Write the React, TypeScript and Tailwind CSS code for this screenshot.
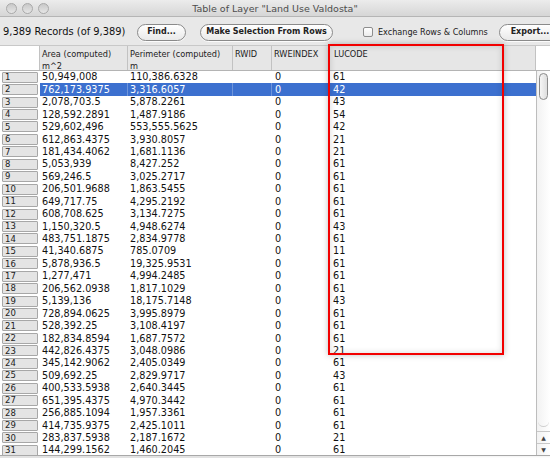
import React from 'react'

const data: Array<[string, string, string]> = [
    ['50,949,008', '110,386.6328', '61'],
    ['762,173.9375', '3,316.6057', '42'],
    ['2,078,703.5', '5,878.2261', '43'],
    ['128,592.2891', '1,487.9186', '54'],
    ['529,602,496', '553,555.5625', '42'],
    ['612,863.4375', '3,930.8057', '21'],
    ['181,434.4062', '1,681.1136', '21'],
    ['5,053,939', '8,427.252', '61'],
    ['569,246.5', '3,025.2717', '61'],
    ['206,501.9688', '1,863.5455', '61'],
    ['649,717.75', '4,295.2192', '61'],
    ['608,708.625', '3,134.7275', '61'],
    ['1,150,320.5', '4,948.6274', '43'],
    ['483,751.1875', '2,834.9778', '61'],
    ['41,340.6875', '785.0709', '11'],
    ['5,878,936.5', '19,325.9531', '61'],
    ['1,277,471', '4,994.2485', '61'],
    ['206,562.0938', '1,817.1029', '61'],
    ['5,139,136', '18,175.7148', '43'],
    ['728,894.0625', '3,995.8979', '61'],
    ['528,392.25', '3,108.4197', '61'],
    ['182,834.8594', '1,687.7572', '61'],
    ['442,826.4375', '3,048.0986', '21'],
    ['345,142.9062', '2,405.0349', '61'],
    ['509,692.25', '2,829.9717', '43'],
    ['400,533.5938', '2,640.3445', '61'],
    ['651,395.4375', '4,970.3442', '61'],
    ['256,885.1094', '1,957.3361', '61'],
    ['414,735.9375', '2,425.1011', '61'],
    ['283,837.5938', '2,187.1672', '21'],
    ['144,299.1562', '1,460.2045', '61']
]

function TrafficLight() {
    return (
        <div className="w-[11px] h-[11px] rounded-full border border-[#a9a9a9] bg-gradient-to-b from-[#c8c8c8] to-[#e6e6e6]" />
    )
}

function PillButton({ label, w }: { label: string; w: string }) {
    return (
        <div
            className={`${w} h-[17px] shrink-0 rounded-full border border-[#8a8a8a] bg-gradient-to-b from-white to-[#e9e9e9] flex items-center justify-center text-[8px] font-bold text-[#222] shadow-[0_1px_0_rgba(255,255,255,0.8)]`}
        >
            {label}
        </div>
    )
}

function HeaderCell({ w, top, bottom }: { w: string; top: string; bottom?: string }) {
    return (
        <div className={`${w} shrink-0 h-full border-r border-[#c2c2c2] pl-[2px] pt-[2px] text-[8.2px] leading-[12px] text-[#222]`}>
            <div>{top}</div>
            {bottom && <div>{bottom}</div>}
        </div>
    )
}

function Row({ idx, item }: { idx: number; item: [string, string, string] }) {
    const selected = idx == 1
    const cell = selected ? 'border-r border-[#6f95da]' : 'border-r border-white'
    return (
        <div
            className={`flex h-[12.45px] items-center text-[9.7px] leading-none ${
                selected ? 'bg-[#3c70cf] text-white' : 'bg-white text-[#111]'
            }`}
        >
            <div className="w-[40px] h-full shrink-0 bg-white flex items-center pl-[2px]">
                <div className="w-[36px] h-[11px] border border-[#a7a7a7] bg-[#e4e4e4] rounded-[1px] flex items-center pl-[2px] text-[8.5px] text-[#222]">
                    {idx + 1}
                </div>
            </div>
            <div className={`w-[88px] h-full shrink-0 flex items-center pl-[2px] ${cell}`}>{item[0]}</div>
            <div className={`w-[105px] h-full shrink-0 flex items-center pl-[2px] ${cell}`}>{item[1]}</div>
            <div className={`w-[39px] h-full shrink-0 ${cell}`}></div>
            <div className={`w-[57px] h-full shrink-0 flex items-center pl-[3px] ${cell}`}>0</div>
            <div className="w-[207px] h-full shrink-0 flex items-center pl-[4px]">{item[2]}</div>
        </div>
    )
}

export default function App() {
    return (
        <div className="relative w-[550px] h-[458px] overflow-hidden bg-[#e8e8e8] flex flex-col font-['DejaVu_Sans',sans-serif]">
            {/* title bar */}
            <div className="relative h-[17px] shrink-0 bg-gradient-to-b from-[#ececec] to-[#d6d6d6] border-b border-[#b5b5b5] flex items-center">
                <div className="flex gap-[5px] pl-[6px] pt-[1px]">
                    <TrafficLight />
                    <TrafficLight />
                    <TrafficLight />
                </div>
                <div className="absolute left-0 right-0 top-[3px] text-center text-[9.5px] leading-[12px] text-[#4d4d4d]">
                    Table of Layer "Land Use Valdosta"
                </div>
            </div>

            {/* toolbar */}
            <div className="h-[28px] shrink-0 flex items-center pl-[3px] pt-[2px] whitespace-nowrap">
                <span className="text-[9.9px] text-[#111] shrink-0 w-[134px]">9,389 Records (of 9,389)</span>
                <PillButton label="Find..." w="w-[49px]" />
                <div className="w-[14px] shrink-0" />
                <PillButton label="Make Selection From Rows" w="w-[133px]" />
                <div className="w-[30px] shrink-0" />
                <div className="w-[10px] h-[10px] shrink-0 border border-[#8d8d8d] rounded-[2px] bg-gradient-to-b from-white to-[#ececec]" />
                <span className="ml-[5px] w-[121px] shrink-0 text-[8.1px] text-[#222]">Exchange Rows &amp; Columns</span>
                <PillButton label="Export..." w="w-[62px]" />
            </div>

            {/* header */}
            <div className="h-[26px] shrink-0 flex border-t border-[#c8c8c8] border-b border-b-[#b4b4b4] bg-[#e6e6e6]">
                <div className="w-[40px] shrink-0 h-full bg-white border-r border-[#c2c2c2]" />
                <HeaderCell w="w-[88px]" top="Area (computed)" bottom="m^2" />
                <HeaderCell w="w-[105px]" top="Perimeter (computed)" bottom="m" />
                <HeaderCell w="w-[39px]" top="RWID" />
                <HeaderCell w="w-[57px]" top="RWEINDEX" />
                <div className="w-[207px] shrink-0 h-full border-r border-[#c2c2c2] pl-[5px] pt-[2px] text-[8.2px] leading-[12px] text-[#222]">
                    LUCODE
                </div>
                <div className="flex-1 h-full bg-white" />
            </div>

            {/* body */}
            <div className="flex flex-1 min-h-0">
                <div className="flex-1 overflow-hidden bg-white">
                    {data.map((item, i) => (
                        <Row key={i} idx={i} item={item} />
                    ))}
                </div>
                <div className="w-[14px] shrink-0 border-l border-[#bdbdbd] bg-gradient-to-r from-[#f2f2f2] to-white flex flex-col">
                    <div className="mx-[2px] mt-[2px] h-[27px] rounded-full border border-[#8a8a8a] bg-gradient-to-r from-[#f6f6f6] to-[#dedede]" />
                    <div className="flex-1 mx-[1px] rounded-b-full border-b border-[#d0d0d0]" />
                    <div className="h-[12px] mt-[4px] flex items-center justify-center text-[6px] text-[#444] border-t border-[#c8c8c8]">▲</div>
                    <div className="h-[12px] flex items-center justify-center text-[6px] text-[#444] border-t border-[#c8c8c8]">▼</div>
                </div>
            </div>

            {/* horizontal scrollbar edge */}
            <div className="h-[3px] shrink-0 border-t border-[#a8a8a8] bg-gradient-to-b from-[#f3f3f3] to-white flex">
                <div className="w-[410px] h-full bg-[#e2e2e2]" />
            </div>

            {/* red highlight */}
            <div className="absolute left-[328px] top-[44px] w-[176px] h-[311px] border-2 border-[#f20000] shadow-[0_0_6px_rgba(0,0,0,0.25),inset_0_0_6px_rgba(0,0,0,0.15)]" />
        </div>
    )
}
